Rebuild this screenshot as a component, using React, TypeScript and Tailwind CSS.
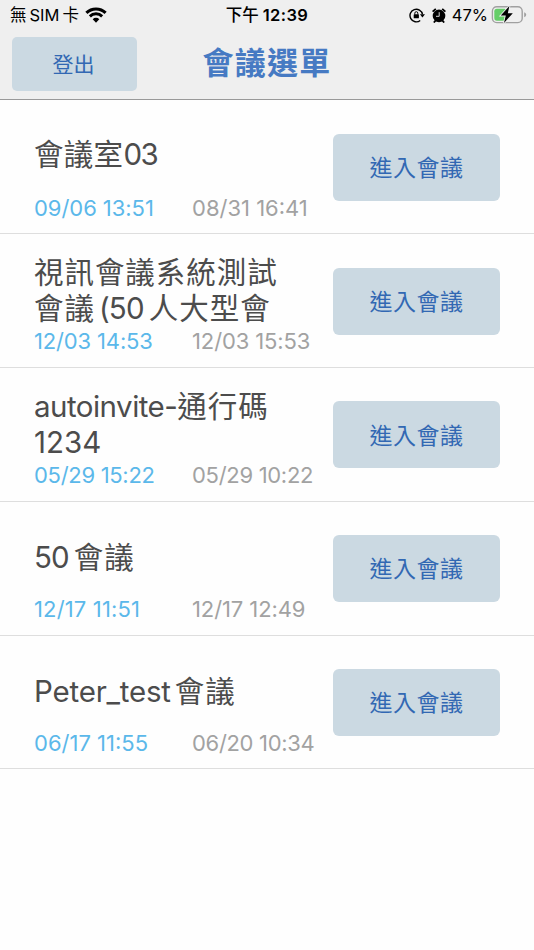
import React from 'react';
import { clsx, type ClassValue } from 'clsx';
import { twMerge } from 'tailwind-merge';

function cn(...inputs: ClassValue[]) {
  return twMerge(clsx(inputs));
}

type Run = { text: string; className?: string };

type Meeting = {
  id: number;
  title: Run[][];
  titleClass: string;
  start: Run;
  end: Run;
};

const cjk = 'tracking-[0.95px]';

const meetings: Meeting[] = [
  {
    id: 1,
    title: [[{ text: '會議室', className: 'tracking-[0.3px]' }, { text: '03', className: 'tracking-[-1.5px]' }]],
    titleClass: 'pt-[36px]',
    start: { text: '09/06 13:51', className: 'tracking-[-0.05px]' },
    end: { text: '08/31 16:41' },
  },
  {
    id: 2,
    title: [
      [{ text: '視訊會議系統測試', className: cjk }],
      [
        { text: '會議', className: cjk },
        { text: '(50', className: 'ml-[4px] tracking-[-0.8px]' },
        { text: '人大型會', className: cn(cjk, 'ml-[5px]') },
      ],
    ],
    titleClass: 'pt-[21px]',
    start: { text: '12/03 14:53', className: 'tracking-[-0.15px]' },
    end: { text: '12/03 15:53', className: 'tracking-[-0.12px]' },
  },
  {
    id: 3,
    title: [
      [{ text: 'autoinvite-', className: 'tracking-[-0.52px]' }, { text: '通行碼', className: cjk }],
      [{ text: '1234', className: 'tracking-[0px]' }],
    ],
    titleClass: 'pt-[21px]',
    start: { text: '05/29 15:22', className: 'tracking-[-0.3px]' },
    end: { text: '05/29 10:22', className: 'tracking-[-0.3px]' },
  },
  {
    id: 4,
    title: [[{ text: '50', className: 'tracking-[-0.9px]' }, { text: '會議', className: cn(cjk, 'ml-[5px]') }]],
    titleClass: 'pt-[38px]',
    start: { text: '12/17 11:51', className: 'tracking-[0.15px]' },
    end: { text: '12/17 12:49', className: 'tracking-[-0.1px]' },
  },
  {
    id: 5,
    title: [[{ text: 'Peter_test', className: 'tracking-[-0.2px]' }, { text: '會議', className: cn(cjk, 'ml-[4px]') }]],
    titleClass: 'pt-[38px]',
    start: { text: '06/17 11:55' },
    end: { text: '06/20 10:34', className: 'tracking-[-0.32px]' },
  },
];

function WifiIcon() {
  return (
    <svg width="22" height="17" viewBox="0 0 22 17" fill="none" stroke="black" className="shrink-0">
      <path d="M1.4 5.9 A13.6 13.6 0 0 1 20.6 5.9" strokeWidth="3.1" />
      <path d="M4.85 9.35 A8.7 8.7 0 0 1 17.15 9.35" strokeWidth="2.9" />
      <path d="M7.7 12.2 A4.7 4.7 0 0 1 14.3 12.2 L11 15.8 Z" fill="black" stroke="none" />
    </svg>
  );
}

function RotationLockIcon() {
  return (
    <svg width="16" height="16" viewBox="0 0 16 16" fill="none" stroke="black" className="shrink-0">
      <path d="M11.2 13.5 A6.3 6.3 0 1 1 13.5 7.4" strokeWidth="1.4" />
      <path d="M10.9 7.2 H16 L13.4 10.6 Z" fill="black" stroke="none" />
      <rect x="4.7" y="7.3" width="5.2" height="4" rx="0.6" fill="black" stroke="none" />
      <path d="M5.8 7.6 V6.2 a1.5 1.5 0 0 1 3 0 V7.6" strokeWidth="1" />
    </svg>
  );
}

function AlarmIcon() {
  return (
    <svg width="14" height="15" viewBox="0 0 14 15" fill="none" stroke="black" className="shrink-0">
      <circle cx="7" cy="7.9" r="6.3" fill="black" stroke="none" />
      <path d="M0.6 3.7 L3.8 0.8 M13.4 3.7 L10.2 0.8 M1.8 14.5 L3.6 12.6 M12.2 14.5 L10.4 12.6" strokeWidth="1.8" />
      <path d="M7.2 4.2 V8.3 H4" stroke="#efefef" strokeWidth="0.9" />
    </svg>
  );
}

function BatteryIcon() {
  return (
    <svg width="36" height="20" viewBox="0 0 36 20" className="shrink-0">
      <rect x="1.4" y="1.8" width="29.8" height="15.8" rx="4.4" fill="none" stroke="#a0a0a0" strokeWidth="1.4" />
      <path d="M33.2 7.2 Q35.2 7.8 35.2 9.7 Q35.2 11.6 33.2 12.2 Z" fill="#a0a0a0" />
      <rect x="3.3" y="3.7" width="12.7" height="12" rx="2.6" fill="#65ce68" />
      <path
        d="M18.4 1 L9.8 10.6 H14.8 L13 17.9 L21.8 8.2 H16.8 Z"
        fill="black"
        stroke="#efefef"
        strokeWidth="1.8"
        paintOrder="stroke"
      />
    </svg>
  );
}

function StatusBar() {
  return (
    <div className="grid grid-cols-[1fr_auto_1fr] items-center h-[30px] pl-[10px] pr-[7px] text-[16.5px] text-black">
      <div className="flex items-center">
        <span>無</span>
        <span className="ml-[3px]">SIM</span>
        <span className="ml-[3px]">卡</span>
        <span className="ml-[6px]"><WifiIcon /></span>
      </div>
      <div className="font-semibold flex -ml-[3px]">
        <span className="font-medium">下午</span>
        <span className="ml-[4px] tracking-[0.4px]">12:39</span>
      </div>
      <div className="flex items-center justify-end">
        <RotationLockIcon />
        <span className="ml-[7px]"><AlarmIcon /></span>
        <span className="ml-[6px]">47%</span>
        <span className="ml-[3px]"><BatteryIcon /></span>
      </div>
    </div>
  );
}

function MeetingRow({ meeting }: { meeting: Meeting }) {
  return (
    <li className="flex h-[133.75px] border-b border-[#dedede] px-[34px]">
      <div className="flex-1 flex flex-col whitespace-nowrap">
        <div className={cn("h-[90px] text-[29.5px] leading-[35.5px] text-[#4c4c4c]", meeting.titleClass)}>
          {meeting.title.map((line, i) => (
            <div key={i} className="h-[35.5px]">
              {line.map((run) => (
                <span key={run.text} className={run.className}>{run.text}</span>
              ))}
            </div>
          ))}
        </div>
        <div className="flex text-[22px] leading-[34px]">
          <span className={cn("w-[158px] text-[#5bb8ea]", meeting.start.className)}>{meeting.start.text}</span>
          <span className={cn("text-[#a2a2a2]", meeting.end.className)}>{meeting.end.text}</span>
        </div>
      </div>
      <button className="mt-[33.3px] w-[167px] h-[67px] pt-[2px] rounded-[6px] bg-[#cbd9e2] text-[#3268b3] text-[23px] tracking-[0.5px]">
        進入會議
      </button>
    </li>
  );
}

export default function App() {
  return (
    <div className="h-[950px] overflow-hidden bg-[#fefefe] font-['Inter','Noto_Sans_CJK_TC',sans-serif]">
      <header className="h-[100px] bg-[#efefef] border-b border-[#999999]">
        <StatusBar />
        <div className="grid grid-cols-[125px_1fr_125px] px-3 pt-[7px]">
          <button className="h-[54px] pt-[2px] pr-[2px] rounded-[5px] bg-[#cbd9e2] text-[#3268b3] text-[21px]">登出</button>
          <h1 className="h-[50px] leading-[52px] text-center text-[31px] font-bold text-[#467ac3] tracking-[1.2px]">
            會議選單
          </h1>
        </div>
      </header>
      <ul className="pt-[0.7px]">
        {meetings.map((meeting) => (
          <MeetingRow key={meeting.id} meeting={meeting} />
        ))}
      </ul>
    </div>
  );
}
